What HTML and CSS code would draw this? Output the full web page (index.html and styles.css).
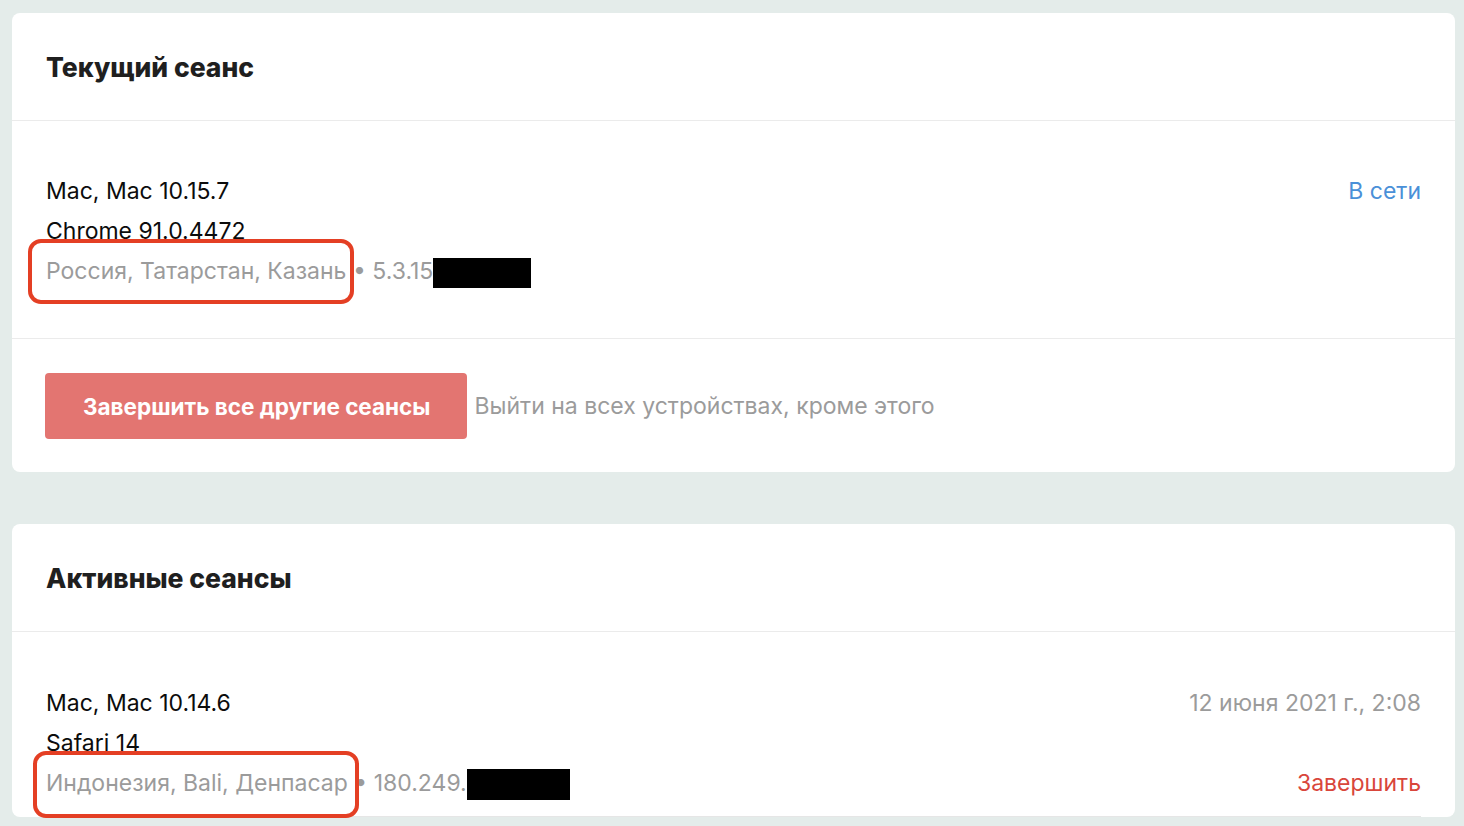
FILE: index.html
```html
<!DOCTYPE html>
<html lang="ru">
<head>
<meta charset="utf-8">
<title>Сеансы</title>
<link rel="stylesheet" href="styles.css">
</head>
<body>
<main class="page">
  <section class="card">
    <header class="card-head"><h2 class="card-title">Текущий сеанс</h2></header>
    <div class="session">
      <div class="session-info">
        <div class="line">Mac, Mac 10.15.7</div>
        <div class="line">Chrome 91.0.4472</div>
        <div class="line muted">
          <span class="loc">Россия, Татарстан, Казань<span class="mark mark-1"></span></span> • 5.3.15<span class="redact redact-1"></span>
        </div>
      </div>
      <div class="session-side">
        <span class="status">В сети</span>
      </div>
    </div>
    <div class="card-actions">
      <button class="btn-danger" type="button">Завершить все другие сеансы</button>
      <span class="hint">Выйти на всех устройствах, кроме этого</span>
    </div>
  </section>

  <section class="card">
    <header class="card-head"><h2 class="card-title">Активные сеансы</h2></header>
    <div class="session session-list">
      <div class="session-info">
        <div class="line">Mac, Mac 10.14.6</div>
        <div class="line">Safari 14</div>
        <div class="line muted">
          <span class="loc">Индонезия, Bali, Денпасар<span class="mark mark-2"></span></span> • 180.249.<span class="redact redact-2"></span>
        </div>
      </div>
      <div class="session-side">
        <span class="date">12 июня 2021 г., 2:08</span>
        <span class="end">Завершить</span>
      </div>
    </div>
  </section>
</main>
</body>
</html>
```

FILE: styles.css
```css
* { box-sizing: border-box; }
html, body { margin: 0; padding: 0; }
body {
  background: #e4ecea;
  font-family: Inter, "Liberation Sans", Arial, sans-serif;
  color: #111;
  height: 826px;
  overflow: hidden;
}
.page {
  padding: 13px 9px 0 12px;
  display: flex;
  flex-direction: column;
  gap: 52px;
}
.card {
  background: #fff;
  border-radius: 8px;
}
.card-head {
  height: 108px;
  padding: 0 34px;
  display: flex;
  align-items: center;
  border-bottom: 1px solid #ebebeb;
}
.card-title {
  margin: 0;
  font-size: 26.5px;
  font-weight: 800;
  color: #1f1f1f;
}
.session {
  display: flex;
  justify-content: space-between;
  padding: 50px 34px 47px;
  border-bottom: 1px solid #ebebeb;
}
.session-list {
  margin: 0 34px;
  padding: 51px 0 13px;
  border-bottom: 1px solid #e6e6e6;
}
.session-info { display: flex; flex-direction: column; }
.line {
  height: 40px;
  line-height: 40px;
  font-size: 23px;
  color: #0c0c0c;
  white-space: nowrap;
}
.muted { color: #9b9b9b; }
.loc { position: relative; }
.mark {
  position: absolute;
  border: 4px solid #e43f24;
  border-radius: 13px;
  pointer-events: none;
}
.mark-1 { left: -18px; right: -8px; top: -18px; bottom: -19px; }
.mark-2 { left: -13px; right: -11px; top: -18px; bottom: -21px; }
.redact {
  display: inline-block;
  background: #000;
  vertical-align: middle;
}
.redact-1 { width: 98px; height: 30px; }
.redact-2 { width: 103px; height: 31px; }
.session-side {
  display: flex;
  flex-direction: column;
  justify-content: space-between;
  align-items: flex-end;
  font-size: 23px;
  line-height: 40px;
}
.status { color: #4a90d8; }
.date { color: #9b9b9b; }
.end { color: #d9463b; }
.card-actions {
  display: flex;
  align-items: center;
  gap: 7px;
  padding: 34px 34px 33px 33px;
}
.btn-danger {
  height: 66px;
  padding: 0 37px 0 38px;
  border: none;
  border-radius: 4px;
  background: #e37571;
  color: #fff;
  font-family: inherit;
  font-size: 22.5px;
  font-weight: 700;
}
.hint {
  font-size: 23px;
  color: #9b9b9b;
}
```
